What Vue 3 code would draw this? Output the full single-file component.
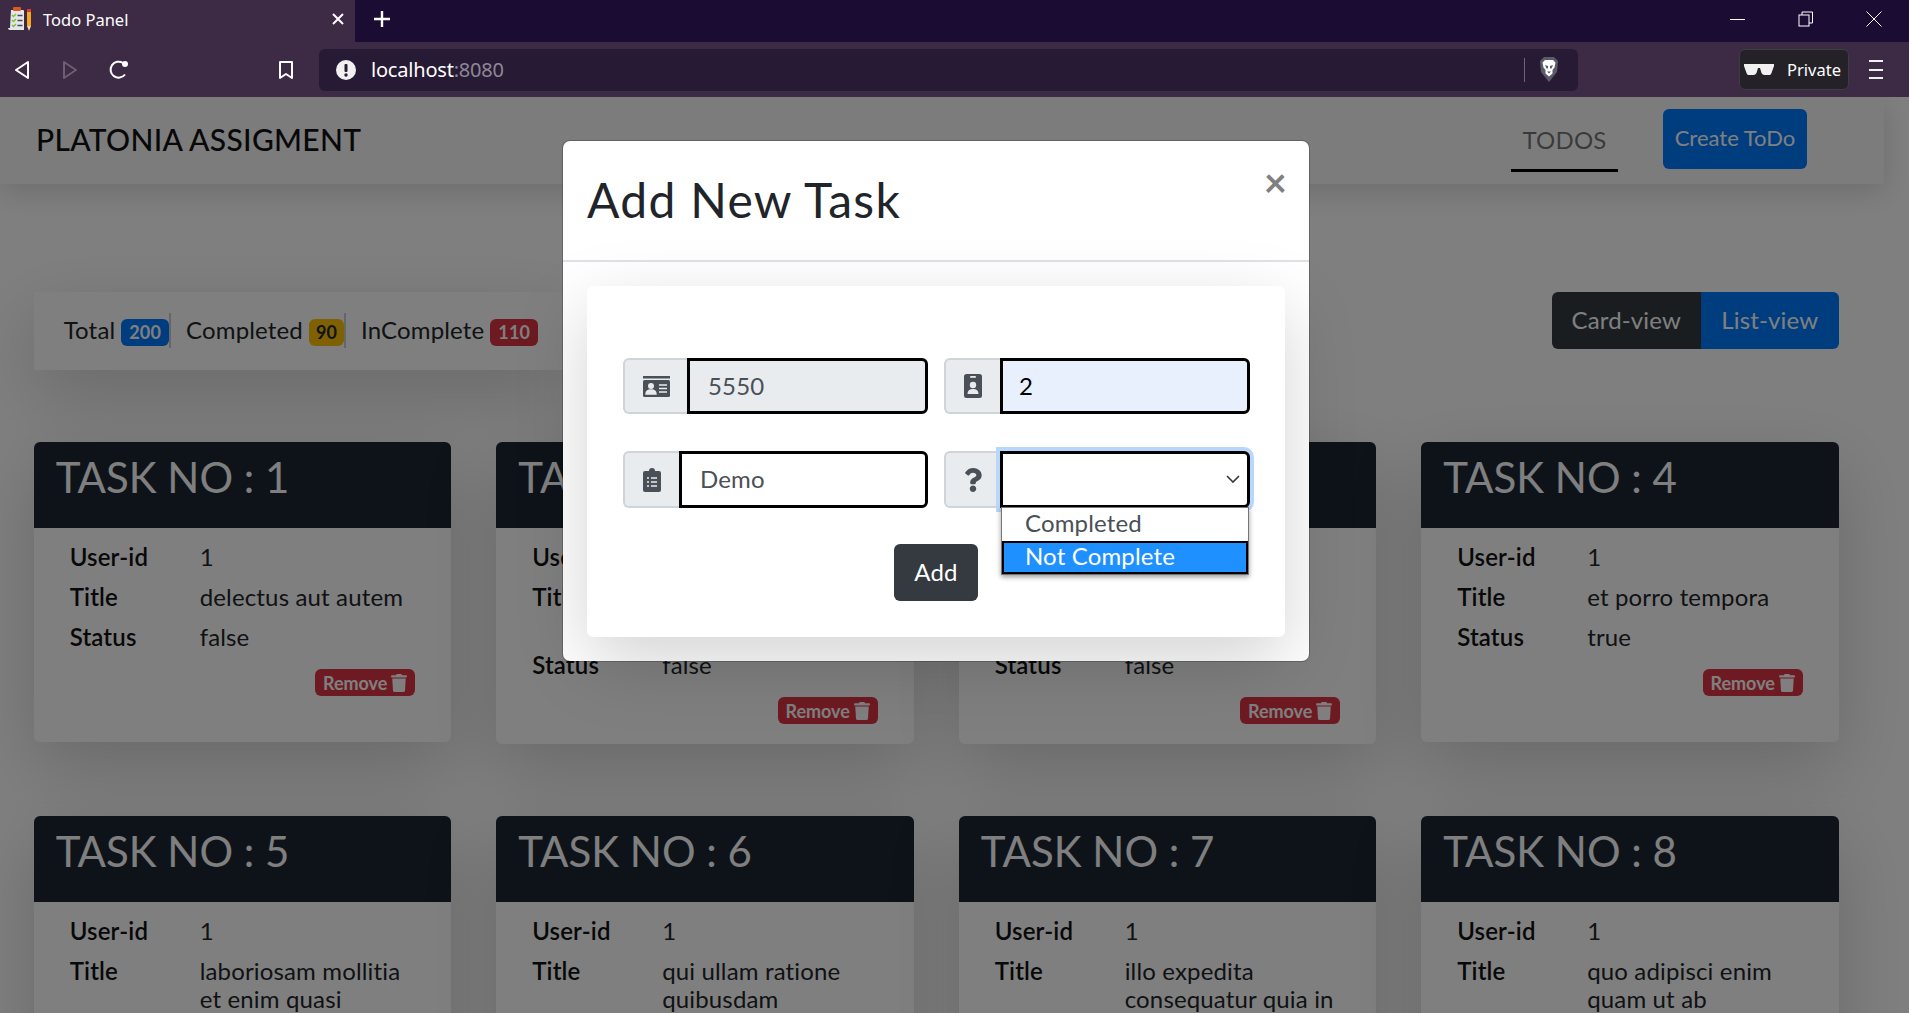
<script setup>
const stats = [
  { label: 'Total', count: 200, kind: 'primary' },
  { label: 'Completed', count: 90, kind: 'warning' },
  { label: 'InComplete', count: 110, kind: 'danger' }
]

const tasks = [
  { id: 1, title: 'delectus aut autem', done: false },
  { id: 2, title: 'quis ut nam facilis et officia qui', done: false },
  { id: 3, title: 'fugiat veniam minus', done: false },
  { id: 4, title: 'et porro tempora', done: true },
  { id: 5, title: 'laboriosam mollitia et enim quasi', done: false },
  { id: 6, title: 'qui ullam ratione quibusdam', done: false },
  { id: 7, title: 'illo expedita consequatur quia in', done: false },
  { id: 8, title: 'quo adipisci enim quam ut ab', done: true }
]
</script>

<template>
  <div class="app">
    <div class="tabstrip">
      <div class="tab">
        <svg class="favicon" width="26" height="25" viewBox="0 0 26 25">
          <path d="M4 3h12a1 1 0 0 1 1 1v19H3q-2 0-2-2h2z" fill="#e4e6ea" />
          <rect x="6" y="0" width="8" height="4" rx="1" fill="#e2571e" />
          <path d="M5 8l1.500 1.500L9 7M5 13l1.500 1.500L9 12M5 18l1.500 1.500L9 17" stroke="#7cc13a" stroke-width="1.500" fill="none" />
          <path d="M10.500 8.500h5M10.500 13.500h5M10.500 18.500h5" stroke="#4b4b55" stroke-width="1.700" />
          <rect x="20" y="5" width="4" height="14" fill="#f5a623" />
          <rect x="20" y="2" width="4" height="3" fill="#d9411e" />
          <path d="M20 19h4l-2 5z" fill="#eed9b0" />
        </svg>
        <span class="tab-title">Todo Panel</span>
        <svg class="tab-close" width="14" height="14" viewBox="0 0 14 14">
          <path d="M2 2l10 10M12 2L2 12" stroke="#fff" stroke-width="2" />
        </svg>
      </div>
      <svg class="new-tab" width="18" height="18" viewBox="0 0 18 18">
        <path d="M9 1v16M1 9h16" stroke="#fff" stroke-width="2.400" />
      </svg>
      <div class="window-btns">
        <svg width="16" height="16" viewBox="0 0 16 16"><path d="M0 8.500h15" stroke="#fff" /></svg>
        <svg width="16" height="16" viewBox="0 0 16 16" fill="none" stroke="#fff"><rect x="1" y="4" width="10" height="11" /><path d="M4 4V1h10.500v11H11" /></svg>
        <svg width="16" height="16" viewBox="0 0 16 16"><path d="M0.500 0.500l15 15M15.500 0.500l-15 15" stroke="#fff" /></svg>
      </div>
    </div>

    <div class="toolbar">
      <svg class="nav-back" width="16" height="20" viewBox="0 0 16 20" fill="none" stroke="#fff" stroke-width="2" stroke-linejoin="round">
        <path d="M14 2v16L2 10z" />
      </svg>
      <svg class="nav-forward" width="16" height="20" viewBox="0 0 16 20" fill="none" stroke="#6d5e74" stroke-width="2" stroke-linejoin="round">
        <path d="M2 2v16l12-8z" />
      </svg>
      <svg class="nav-reload" width="22" height="22" viewBox="0 0 22 22" fill="none">
        <path d="M17 15.500A8 8 0 1 1 15 4" stroke="#fff" stroke-width="2" />
        <circle cx="17" cy="5" r="3" fill="#fff" />
      </svg>
      <svg class="nav-bookmark" width="16" height="20" viewBox="0 0 16 20" fill="none" stroke="#fff" stroke-width="2" stroke-linejoin="round">
        <path d="M2 2h12v16l-6-4-6 4z" />
      </svg>
      <div class="address">
        <svg width="20" height="20" viewBox="0 0 20 20">
          <circle cx="10" cy="10" r="10" fill="#f1f1f1" />
          <rect x="8.500" y="4" width="3" height="8" rx="1" fill="#271a34" />
          <circle cx="10" cy="15" r="1.700" fill="#271a34" />
        </svg>
        <span class="url">localhost<span class="url-port">:8080</span></span>
        <span class="address-sep"></span>
        <svg class="lion" width="18" height="25" viewBox="0 0 18 25">
          <path d="M4 0h10l4 4-1 11-8 10-8-10L0 4z" fill="#5a5b66" />
          <path d="M5 3h8l2.500 2.500-1 5-2 2.500v3.500l-3.500 3-3.500-3V13l-2-2.500-1-5z" fill="#fff" />
          <path d="M5 8l3 1v2.500H6.500zM13 8l-3 1v2.500h1.500z" fill="#5a5b66" />
          <path d="M7 14.500h4L9 16.500z" fill="#5a5b66" />
        </svg>
      </div>
      <div class="private">
        <svg width="30" height="11" viewBox="0 0 30 11">
          <path d="M0 0h30v2l-2.500 7q-.5 2-2 2h-5q-2 0-3-2l-1.500-5h-2l-1.500 5q-1 2-3 2h-5q-1.500 0-2-2L0 2z" fill="#f1f1f1" />
        </svg>
        <span>Private</span>
      </div>
      <div class="hamburger"><i></i><i></i><i></i></div>
    </div>

    <div class="viewport">
      <div class="page">
        <header class="navbar">
          <span class="brand">PLATONIA ASSIGMENT</span>
          <a class="nav-link">TODOS</a>
          <button class="btn btn-primary create">Create ToDo</button>
        </header>

        <main class="content">
          <div class="top-row">
            <div class="stats">
              <div v-for="stat in stats" :key="stat.label" class="stat">
                <span>{{ stat.label }}</span>
                <span :class="['badge', stat.kind]">{{ stat.count }}</span>
              </div>
            </div>
            <div class="view-toggle">
              <button class="btn btn-dark">Card-view</button>
              <button class="btn btn-primary">List-view</button>
            </div>
          </div>

          <div class="grid">
            <article v-for="task in tasks" :key="task.id" class="card">
              <h2 class="card-head">TASK NO : {{ task.id }}</h2>
              <div class="card-body">
                <div class="row"><b>User-id</b><span>1</span></div>
                <div class="row"><b>Title</b><span>{{ task.title }}</span></div>
                <div class="row"><b>Status</b><span>{{ task.done }}</span></div>
                <div class="card-actions">
                  <span class="remove">Remove
                    <svg width="16" height="18" viewBox="0 0 448 512">
                      <path fill="currentColor" d="M432 32H312l-9.400-18.700A24 24 0 0 0 281.100 0H166.800a23.720 23.720 0 0 0-21.400 13.300L136 32H16A16 16 0 0 0 0 48v32a16 16 0 0 0 16 16h416a16 16 0 0 0 16-16V48a16 16 0 0 0-16-16zM53.200 467a48 48 0 0 0 47.900 45h245.800a48 48 0 0 0 47.900-45L416 128H32z" />
                    </svg>
                  </span>
                </div>
              </div>
            </article>
          </div>
        </main>
      </div>

      <div class="backdrop"></div>

      <div class="modal">
        <div class="modal-head">
          <h1>Add New Task</h1>
          <span class="modal-close">×</span>
        </div>
        <div class="modal-body">
          <form class="form-card" @submit.prevent>
            <div class="fields">
              <div class="group">
                <span class="prepend wide">
                  <svg width="27" height="21" viewBox="0 0 27 21">
                    <rect y="0" width="27" height="2.500" fill="#495057" />
                    <rect y="4" width="27" height="17" rx="1.500" fill="#495057" />
                    <circle cx="8" cy="10" r="3" fill="#e9ecef" />
                    <path d="M3 18q0-4 5-4t5 4zM16 9h8M16 12.500h8M16 16h8" fill="#e9ecef" stroke="#e9ecef" stroke-width="1.400" />
                  </svg>
                </span>
                <input class="control disabled" value="5550" readonly />
              </div>
              <div class="group">
                <span class="prepend">
                  <svg width="18" height="24" viewBox="0 0 18 24">
                    <rect width="18" height="24" rx="2.500" fill="#495057" />
                    <rect x="6" y="2" width="6" height="1.800" rx=".9" fill="#e9ecef" />
                    <circle cx="9" cy="11" r="3.200" fill="#e9ecef" />
                    <path d="M3.500 20q0-5 5.500-5t5.500 5z" fill="#e9ecef" />
                  </svg>
                </span>
                <input class="control autofill" value="2" readonly />
              </div>
              <div class="group">
                <span class="prepend">
                  <svg width="18" height="24" viewBox="0 0 18 24">
                    <path d="M2 3h4a3 3 0 0 1 6 0h4a2 2 0 0 1 2 2v17a2 2 0 0 1-2 2H2a2 2 0 0 1-2-2V5a2 2 0 0 1 2-2z" fill="#495057" />
                    <path d="M4 10h2M8 10h6M4 14h2M8 14h6M4 18h2M8 18h6" stroke="#e9ecef" stroke-width="1.700" />
                  </svg>
                </span>
                <input class="control" value="Demo" readonly />
              </div>
              <div class="group">
                <span class="prepend">
                  <svg width="18" height="24" viewBox="0 0 384 512">
                    <path fill="#495057" d="M202.021 0C122.202 0 70.503 32.703 29.914 91.026c-7.363 10.580-5.093 25.086 5.178 32.874l43.138 32.709c10.373 7.865 25.132 6.026 33.253-4.148 25.049-31.381 43.630-49.449 82.757-49.449 30.764 0 68.816 19.799 68.816 49.631 0 22.552-18.617 34.134-48.993 51.164-35.423 19.860-82.299 44.576-82.299 106.405V320c0 13.255 10.745 24 24 24h72.471c13.255 0 24-10.745 24-24v-5.773c0-42.860 125.268-44.645 125.268-160.627C377.504 66.256 286.902 0 202.021 0zM192 373.459c-38.196 0-69.271 31.075-69.271 69.271 0 38.195 31.075 69.270 69.271 69.270s69.271-31.075 69.271-69.271-31.075-69.270-69.271-69.270z" />
                  </svg>
                </span>
                <div class="select">
                  <svg width="14" height="9" viewBox="0 0 14 9" fill="none">
                    <path d="M1 1l6 6 6-6" stroke="#343a40" stroke-width="1.600" />
                  </svg>
                  <ul class="options">
                    <li>Completed</li>
                    <li class="active">Not Complete</li>
                  </ul>
                </div>
              </div>
            </div>
            <div class="form-actions">
              <button class="btn btn-dark add">Add</button>
            </div>
          </form>
        </div>
      </div>
    </div>
  </div>
</template>

<style>
html,
body {
  margin: 0;
  overflow: hidden;
}
</style>

<style scoped>
.app {
  width: 1909px;
  height: 1013px;
  overflow: hidden;
  display: flex;
  flex-direction: column;
  font-family: Lato, "Noto Sans", sans-serif;
  font-size: 24px;
  letter-spacing: 0.15px;
  color: #212529;
  background: #fff;
}

.tabstrip {
  height: 42px;
  flex: none;
  display: flex;
  align-items: center;
  background: #1b0c33;
  color: #fff;
  font-family: "Noto Sans", sans-serif;
  letter-spacing: 0;
}

.tab {
  width: 355px;
  height: 42px;
  box-sizing: border-box;
  padding: 0 10px 4px 7px;
  display: flex;
  align-items: center;
  background: #3d2a45;
}

.tab-title {
  margin-left: 10px;
  flex: 1;
  font-size: 16.500px;
}

.new-tab {
  margin: 0 0 4px 18px;
}

.window-btns {
  margin-left: auto;
  margin-right: 27px;
  margin-bottom: 4px;
  display: flex;
  gap: 52px;
}

.toolbar {
  height: 55px;
  flex: none;
  display: flex;
  align-items: center;
  background: #3d2a45;
  color: #fff;
  font-family: "Noto Sans", sans-serif;
  letter-spacing: 0;
}

.nav-back {
  margin-left: 14px;
}

.nav-forward {
  margin-left: 32px;
}

.nav-reload {
  margin-left: 30px;
}

.nav-bookmark {
  margin-left: 148px;
}

.address {
  margin-left: 25px;
  width: 1259px;
  height: 42px;
  box-sizing: border-box;
  padding: 0 12px 0 17px;
  display: flex;
  align-items: center;
  background: #271a34;
  border-radius: 6px;
}

.url {
  margin-left: 15px;
  font-size: 20px;
  letter-spacing: -0.2px;
}

.url-port {
  color: #8f8797;
}

.address-sep {
  width: 1px;
  height: 24px;
  margin-left: auto;
  margin-right: 15px;
  background: #6d6475;
}

.lion {
  margin-right: 8px;
}

.private {
  margin-left: 161px;
  width: 110px;
  height: 41px;
  box-sizing: border-box;
  padding: 0 7px 0 4px;
  display: flex;
  align-items: center;
  justify-content: space-between;
  background: #242228;
  border: 1px solid #3d3e40;
  border-radius: 6px;
  font-size: 16.500px;
}

.hamburger {
  margin-left: 20px;
  width: 14px;
  display: flex;
  flex-direction: column;
  gap: 6.500px;
}

.hamburger i {
  height: 2px;
  background: #f1f1f1;
}

.viewport {
  position: relative;
  flex: 1;
  overflow: hidden;
}

.page {
  width: 1884px;
}

.navbar {
  height: 87px;
  box-sizing: border-box;
  padding: 12px 77px 0 36px;
  display: flex;
  align-items: flex-start;
  background: #f8f9fa;
  box-shadow: 0 8px 30px rgba(0, 0, 0, 0.15);
}

.brand {
  margin-top: 12px;
  margin-right: auto;
  font-size: 30px;
  font-weight: 500;
  letter-spacing: 0.3px;
  color: #111;
}

.nav-link {
  width: 107px;
  height: 47px;
  margin-right: 45px;
  padding-top: 13px;
  border-bottom: 3px solid #000;
  text-align: center;
  line-height: 36px;
  color: rgba(0, 0, 0, 0.55);
}

.btn {
  border: 0;
  font: inherit;
  letter-spacing: inherit;
  color: #fff;
  line-height: 1.5;
  white-space: nowrap;
}

.btn-primary {
  background: #007bff;
}

.btn-dark {
  background: #343a40;
}

.create {
  width: 144px;
  height: 60px;
  padding: 0 0 4px;
  border-radius: 6px;
  font-size: 22px;
  letter-spacing: 0;
}

.content {
  padding: 108px 45.300px 0 33.700px;
}

.top-row {
  display: flex;
  align-items: flex-start;
  justify-content: space-between;
}

.stats {
  width: 533px;
  height: 78px;
  box-sizing: border-box;
  padding: 21px 0 0 30px;
  display: flex;
  background: #fff;
  box-shadow: 0 24px 72px rgba(0, 0, 0, 0.175);
}

.stat {
  height: 35px;
  margin-right: 15px;
  display: flex;
  gap: 6px;
  border-right: 2px solid #c8ccd0;
  line-height: 34px;
}

.stat:last-child {
  border-right: 0;
}

.badge {
  align-self: flex-start;
  margin-top: 6px;
  height: 27px;
  padding: 0 8px;
  border-radius: 6px;
  font-size: 18px;
  font-weight: 700;
  line-height: 27px;
}

.badge.primary {
  background: #007bff;
  color: #fff;
}

.badge.warning {
  padding: 0 7px;
  background: #ffc107;
  color: #212529;
}

.badge.danger {
  background: #dc3545;
  color: #fff;
}

.view-toggle {
  display: flex;
  height: 57px;
}

.view-toggle .btn {
  padding: 0 0 2px;
}

.view-toggle .btn-dark {
  width: 149px;
  border-radius: 6px 0 0 6px;
}

.view-toggle .btn-primary {
  width: 138px;
  border-radius: 0 6px 6px 0;
}

.grid {
  margin-top: 72px;
  display: grid;
  grid-template-columns: repeat(4, 1fr);
  align-items: start;
  gap: 72px 45px;
}

.card {
  min-height: 300px;
  border-radius: 6px;
  background: #fff;
  box-shadow: 0 24px 72px rgba(0, 0, 0, 0.175);
  overflow: hidden;
}

.card-head {
  height: 86px;
  box-sizing: border-box;
  margin: 0;
  padding: 10px 22px 0;
  background: #1c2634;
  color: #fff;
  font-size: 42px;
  font-weight: 400;
  letter-spacing: 0;
  line-height: 50px;
}

.card-body {
  padding: 15px 36px 20px;
}

.row {
  display: grid;
  grid-template-columns: 130px 1fr;
  margin-bottom: 12px;
  line-height: 28px;
}

.row span {
  padding-right: 5px;
}

.row b {
  font-weight: 600;
  color: #111;
}

.card-actions {
  margin-top: 18px;
  display: flex;
  justify-content: flex-end;
}

.remove {
  width: 100px;
  height: 27px;
  box-sizing: border-box;
  display: flex;
  align-items: center;
  justify-content: center;
  gap: 4px;
  border-radius: 6px;
  background: #dc3545;
  color: #fff;
  font-size: 18px;
  font-weight: 700;
  letter-spacing: 0;
}

.backdrop {
  position: absolute;
  inset: 0;
  background: rgba(0, 0, 0, 0.5);
}

.modal {
  position: absolute;
  left: 563px;
  top: 44px;
  width: 746px;
  box-sizing: border-box;
  background: #fff;
  border-radius: 7px;
  box-shadow: 0 0 0 1px rgba(0, 0, 0, 0.2);
}

.modal-head {
  height: 121px;
  box-sizing: border-box;
  padding: 0 24px;
  display: flex;
  align-items: flex-start;
  justify-content: space-between;
  border-bottom: 2px solid #dee2e6;
}

.modal-head h1 {
  margin: 30px 0 0;
  font-size: 48px;
  font-weight: 400;
  letter-spacing: 1.300px;
  line-height: 58px;
}

.modal-close {
  margin: 17px -2px 0 0;
  font-size: 40px;
  font-weight: 700;
  line-height: 48px;
  color: #808080;
}

.modal-body {
  padding: 24px;
}

.form-card {
  padding: 72px 36px 36px;
  border-radius: 6px;
  background: #fff;
  box-shadow: 0 24px 72px rgba(0, 0, 0, 0.175);
}

.fields {
  display: grid;
  grid-template-columns: 305px 306px;
  column-gap: 16px;
  row-gap: 37px;
}

.group {
  display: flex;
  height: 56px;
}

.group:nth-child(n + 3) {
  height: 57px;
}

.prepend {
  width: 56px;
  flex: none;
  box-sizing: border-box;
  display: flex;
  align-items: center;
  justify-content: center;
  background: #e9ecef;
  border: 2px solid #ced4da;
  border-right: 0;
  border-radius: 6px 0 0 6px;
}

.prepend.wide {
  width: 64px;
}

.control {
  flex: 1;
  min-width: 0;
  box-sizing: border-box;
  padding: 0 0 2px 18px;
  background: #fff;
  border: 3px solid #000;
  border-radius: 0 6px 6px 0;
  outline: 0;
  font: inherit;
  letter-spacing: inherit;
  color: #495057;
}

.control.disabled {
  background: #e9ecef;
}

.control.autofill {
  background: #e8f0fe;
  color: #000;
  padding-left: 16px;
}

.select {
  position: relative;
  flex: 1;
  box-sizing: border-box;
  display: flex;
  align-items: center;
  justify-content: flex-end;
  padding-right: 7px;
  background: #fff;
  border: 3px solid #000;
  border-radius: 0 6px 6px 0;
  box-shadow: 0 0 0 4px #b9d7fb;
}

.options {
  position: absolute;
  left: -2px;
  right: -2px;
  top: 53px;
  margin: 0;
  padding: 0;
  list-style: none;
  background: #fff;
  border: 1px solid #767676;
  box-shadow: 0 2px 5px rgba(0, 0, 0, 0.4);
}

.options li {
  height: 33px;
  box-sizing: border-box;
  padding-left: 23px;
  line-height: 29px;
  color: #495057;
}

.options li.active {
  background: #1e90ff;
  border: 2px solid #000;
  padding-left: 21px;
  line-height: 25px;
  color: #fff;
}

.form-actions {
  margin-top: 36px;
  display: flex;
  justify-content: center;
}

.add {
  width: 84px;
  height: 57px;
  padding: 0 0 2px;
  border-radius: 6px;
}
</style>
